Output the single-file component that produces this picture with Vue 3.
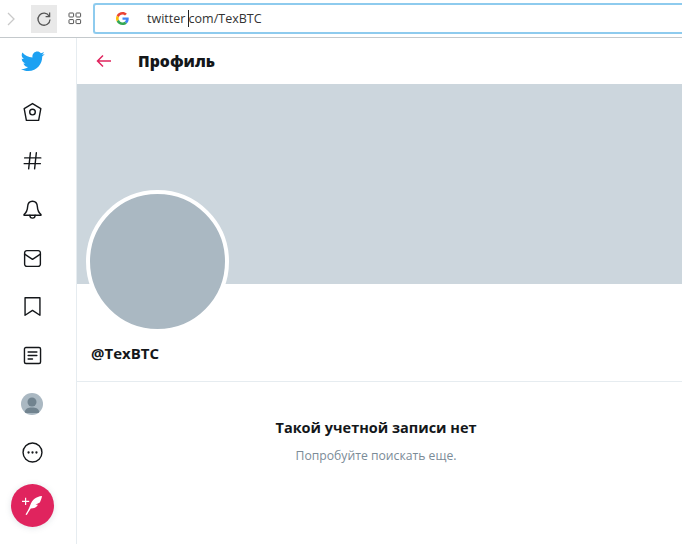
<script setup>
const navIcons = [
  { name: 'home', paths: ['M12 1.800 21.500 7.500 19 21H5L2.500 7.500Z'], circle: true },
  { name: 'hash', paths: ['M9.600 3 7.600 21.500M16.400 3 14.400 21.500M3 9H21.500M2.500 15.600H21'] },
  { name: 'bell', paths: ['M12 2.500C8 2.500 6.600 5.500 6.400 9 6.200 13 5 15.500 2.300 17.800V18.500H21.700V17.800C19 15.500 17.800 13 17.600 9 17.400 5.500 16 2.500 12 2.500Z', 'M9 18.500C9 20.500 10.300 21.800 12 21.800S15 20.500 15 18.500'] },
  { name: 'mail', paths: ['M5.500 3H18.500A2.500 2.500 0 0 1 21 5.500V18.500A2.500 2.500 0 0 1 18.500 21H5.500A2.500 2.500 0 0 1 3 18.500V5.500A2.500 2.500 0 0 1 5.500 3Z', 'M3 7 12 13 21 7'] },
  { name: 'bookmark', paths: ['M3.500 2H20.500V22L12 16.500 3.500 22Z'] },
  { name: 'list', paths: ['M4.500 2.800H19.500A1.700 1.700 0 0 1 21.200 4.500V19.500A1.700 1.700 0 0 1 19.500 21.200H4.500A1.700 1.700 0 0 1 2.800 19.500V4.500A1.700 1.700 0 0 1 4.500 2.800Z', 'M7 8H17M7 12H17M7 16H12'] },
]
</script>

<template>
  <div class="page">
    <header class="browser">
      <svg class="chevron" width="10" height="14" viewBox="0 0 10 14"><path d="M2 1 8 7 2 13" fill="none" stroke="#c9c9c9" stroke-width="1.300" /></svg>
      <div class="reload">
        <svg width="16" height="16" viewBox="0 0 16 16" fill="none" stroke="#555" stroke-width="1.300">
          <path d="M13.200 5.200A6 6 0 1 0 14 8.400" />
          <path d="M13.600 1.600V5.600H9.600" />
        </svg>
      </div>
      <svg class="grid-btn" width="14" height="13" viewBox="0 0 14 13" fill="none" stroke="#555" stroke-width="1">
        <rect x="1" y="1" width="4.600" height="4" rx=".6" />
        <rect x="8" y="1" width="4.600" height="4" rx=".6" />
        <rect x="1" y="7.600" width="4.600" height="4" rx=".6" />
        <rect x="8" y="7.600" width="4.600" height="4" rx=".6" />
      </svg>
      <div class="address">
        <svg class="g-logo" width="13" height="13" viewBox="0 0 48 48">
          <path fill="#EA4335" d="M24 9.500c3.500 0 6.700 1.200 9.200 3.600l6.900-6.900C35.900 2.400 30.500 0 24 0 14.600 0 6.500 5.400 2.600 13.200l8 6.200C12.500 13.600 17.800 9.500 24 9.500z" />
          <path fill="#4285F4" d="M46.900 24.500c0-1.600-.1-3.100-.4-4.500H24v9h12.900c-.6 3-2.200 5.500-4.800 7.200l7.700 6c4.500-4.200 7.100-10.300 7.100-17.700z" />
          <path fill="#FBBC05" d="M10.600 28.600c-.5-1.400-.8-3-.8-4.600s.3-3.200.8-4.600l-8-6.200C.9 16.500 0 20.100 0 24s.9 7.500 2.600 10.800l8-6.200z" />
          <path fill="#34A853" d="M24 48c6.500 0 11.900-2.100 15.900-5.800l-7.700-6c-2.200 1.400-4.900 2.300-8.200 2.300-6.200 0-11.500-4.200-13.400-9.800l-8 6.200C6.500 42.600 14.600 48 24 48z" />
        </svg>
        <span class="url">twitter <i class="caret"></i>com/TexBTC</span>
      </div>
    </header>

    <div class="body">
      <aside class="side">
        <svg class="bird" width="24" height="24" viewBox="0 0 24 24">
          <path fill="#1da1f2" d="M23.600 4.900c-.9.400-1.800.7-2.800.8 1-.6 1.800-1.600 2.200-2.700-1 .6-2 1-3.100 1.200-.9-1-2.200-1.600-3.600-1.600-2.700 0-4.900 2.200-4.900 4.900 0 .4 0 .8.100 1.100C7.400 8.400 3.800 6.400 1.400 3.500 1 4.200.7 5.100.7 6c0 1.700.9 3.200 2.200 4.100-.8 0-1.600-.2-2.200-.6v.1c0 2.400 1.700 4.400 3.900 4.800-.4.100-.8.200-1.300.2-.3 0-.6 0-.9-.1.600 2 2.400 3.400 4.600 3.400-1.700 1.300-3.800 2.100-6.100 2.100-.4 0-.8 0-1.200-.1 2.200 1.400 4.800 2.200 7.500 2.200 9.100 0 14-7.500 14-14v-.6c1-.7 1.800-1.600 2.500-2.500z" />
        </svg>
        <nav class="nav">
          <span v-for="icon in navIcons" :key="icon.name" class="nav-item">
            <svg width="21" height="21" viewBox="0 0 24 24" fill="none" stroke="#14171a" stroke-width="1.600" stroke-linejoin="round" stroke-linecap="round">
              <path v-for="d in icon.paths" :key="d" :d="d" />
              <circle v-if="icon.circle" cx="12" cy="11.500" r="3.200" />
            </svg>
          </span>
          <span class="nav-item">
            <span class="mini-avatar">
              <svg width="22" height="22" viewBox="0 0 22 22"><circle cx="11" cy="9" r="4.500" fill="#71838f" /><path d="M3.500 20C4 15.500 7 14.500 11 14.500S18 15.500 18.500 20Z" fill="#71838f" /></svg>
            </span>
          </span>
          <span class="nav-item">
            <svg width="21" height="21" viewBox="0 0 24 24" fill="none" stroke="#14171a" stroke-width="1.600">
              <circle cx="12" cy="12" r="10.800" />
              <circle cx="7.500" cy="12" r="1.300" fill="#14171a" stroke="none" />
              <circle cx="12" cy="12" r="1.300" fill="#14171a" stroke="none" />
              <circle cx="16.500" cy="12" r="1.300" fill="#14171a" stroke="none" />
            </svg>
          </span>
        </nav>
        <button class="compose">
          <svg width="24" height="24" viewBox="0 0 24 24" fill="#fff">
            <path d="M5 7.800V4.800H6.200V7.800H9.200V9H6.200V12H5V9H2V7.800Z" />
            <path d="M22 3C16 3.500 12 7 10.300 12 9 15.500 7.500 18.500 5.500 21.500L6.800 22C8 20 9.200 18 10.800 15.600 13.800 15.500 16.500 14.500 18 11.800L15.500 11.800 19.800 9.500C20.800 7.500 21.700 5.300 22 3Z" />
          </svg>
        </button>
      </aside>

      <main class="main">
        <div class="topbar">
          <svg width="16" height="14" viewBox="0 0 16 14" fill="none" stroke="#e0245e" stroke-width="1.500"><path d="M15 7H1.500M7 1.500 1.500 7 7 12.500" /></svg>
          <h1>Профиль</h1>
        </div>
        <div class="banner"></div>
        <div class="avatar"></div>
        <div class="handle">@TexBTC</div>
        <div class="empty">
          <h2>Такой учетной записи нет</h2>
          <p>Попробуйте поискать еще.</p>
        </div>
      </main>
    </div>
  </div>
</template>

<style>
html, body {
  margin: 0;
  background: #fff;
}
</style>

<style scoped>
.page {
  width: 682px;
  height: 544px;
  overflow: hidden;
  font-family: "Open Sans", "Noto Sans", sans-serif;
  color: #14171a;
  background: #fff;
}

.browser {
  height: 38px;
  box-sizing: border-box;
  display: flex;
  align-items: center;
  padding: 0 0 0 6px;
  border-bottom: 1px solid #c4c9cc;
}

.chevron {
  margin-right: 15px;
}

.reload {
  width: 26px;
  height: 28px;
  display: flex;
  align-items: center;
  justify-content: center;
  background: #e9e9e9;
}

.grid-btn {
  margin-left: 11px;
}

.address {
  flex: 1;
  height: 31px;
  margin-left: 11px;
  box-sizing: border-box;
  display: flex;
  align-items: center;
  border: 2px solid #8ecbee;
  border-right: none;
  border-radius: 3px 0 0 3px;
  padding-left: 21px;
}

.url {
  margin-left: 18px;
  font-size: 12.500px;
  color: #333;
  display: flex;
  align-items: center;
  white-space: pre;
}

.caret {
  width: 1px;
  height: 17px;
  background: #222;
  margin-left: -1px;
}

.body {
  display: flex;
  height: 506px;
}

.side {
  width: 77px;
  box-sizing: border-box;
  border-right: 1px solid #e6ecf0;
  display: flex;
  flex-direction: column;
  align-items: center;
  padding: 11px 12px 0 0;
}

.bird {
  display: block;
  margin-left: 1px;
}

.nav {
  display: flex;
  flex-direction: column;
  align-items: center;
  margin-top: 15px;
}

.nav-item {
  height: 48.600px;
  display: flex;
  align-items: center;
  justify-content: center;
}

.mini-avatar {
  width: 22px;
  height: 22px;
  border-radius: 50%;
  background: #aab8c2;
  overflow: hidden;
  display: block;
}

.compose {
  width: 43px;
  height: 43px;
  margin-top: 7px;
  border: none;
  border-radius: 50%;
  background: #e0245e;
  padding: 0;
  display: flex;
  align-items: center;
  justify-content: center;
  box-shadow: 0 1px 6px rgba(101, 119, 134, .2);
}

.main {
  flex: 1;
  min-width: 0;
}

.topbar {
  height: 46px;
  box-sizing: border-box;
  display: flex;
  align-items: center;
  padding-left: 19px;
}

.topbar h1 {
  margin: 0 0 0 26px;
  font-size: 15.800px;
  font-weight: 800;
}

.banner {
  height: 200px;
  background: #ccd6dd;
}

.avatar {
  width: 135px;
  height: 135px;
  margin: -94px 0 0 9px;
  border: 4px solid #fff;
  border-radius: 50%;
  background: #aab8c2;
  position: relative;
}

.handle {
  padding: 9px 0 0 14px;
  height: 49px;
  box-sizing: border-box;
  font-size: 15px;
  font-weight: 700;
  line-height: 22px;
  border-bottom: 1px solid #e6ecf0;
}

.empty {
  text-align: center;
  padding: 35px 7px 0 0;
}

.empty h2 {
  margin: 0;
  font-size: 14.500px;
  font-weight: 700;
  line-height: 22px;
}

.empty p {
  margin: 8px 0 0;
  font-size: 12.200px;
  line-height: 18px;
  color: #7b8b97;
}
</style>
